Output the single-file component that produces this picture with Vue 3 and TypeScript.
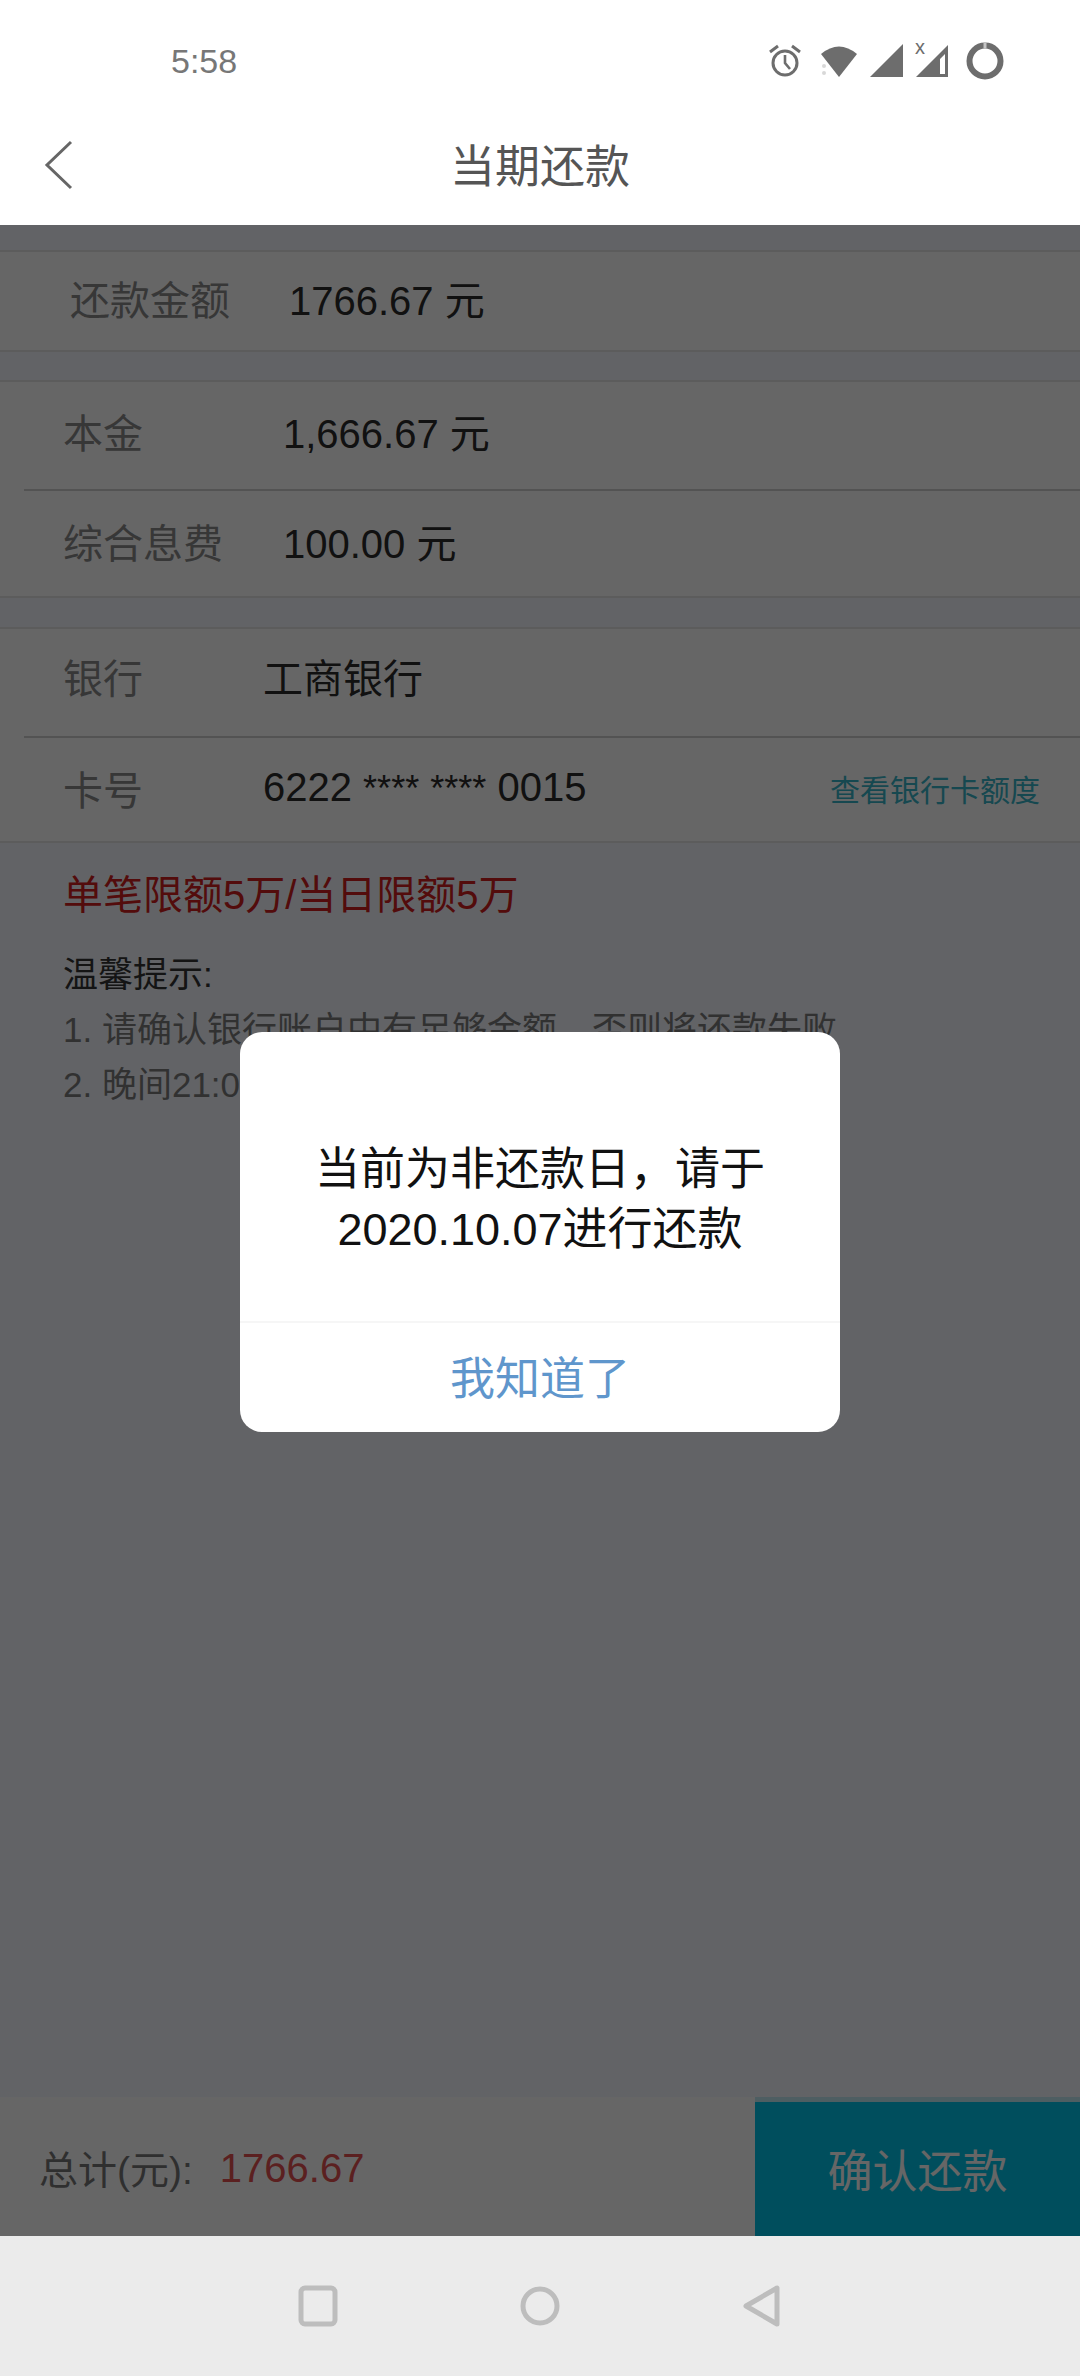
<script setup lang="ts">
interface Row {
  label: string
  value: string
}

const amountRows: Row[] = [
  { label: '本金', value: '1,666.67 元' },
  { label: '综合息费', value: '100.00 元' },
]

const tips = [
  '1. 请确认银行账户中有足够金额，否则将还款失败',
  '2. 晚间21:00至次日07:00为系统维护期，无法还款',
]
</script>

<template>
  <div class="phone">
    <header class="top">
      <div class="status">
        <span class="time">5:58</span>
        <div class="status-icons">
          <svg class="ic-alarm" width="36" height="36" viewBox="0 0 36 36" fill="none" stroke="#6d6d6d" stroke-width="3">
            <circle cx="18" cy="20" r="12" />
            <path d="M18 12v8l5 6" stroke-width="2.6" />
            <path d="M3 9l8-6M33 9l-8-6" />
          </svg>
          <svg class="ic-wifi" width="38" height="34" viewBox="0 0 38 34">
            <path d="M1 10Q19-5 37 10L19 33Z" fill="#6d6d6d" />
            <circle cx="4" cy="22" r="2" fill="#d8d8d8" />
            <circle cx="4" cy="29" r="2" fill="#d8d8d8" />
          </svg>
          <svg class="ic-signal" width="34" height="34" viewBox="0 0 34 34">
            <path d="M0 33L33 0V33Z" fill="#6d6d6d" />
          </svg>
          <div class="ic-sim">
            <svg width="34" height="36" viewBox="0 0 34 36">
              <path d="M1 34L33 2V34ZM25 31H30V11L25 16Z" fill="#6d6d6d" fill-rule="evenodd" />
            </svg>
            <span class="sim-x">x</span>
          </div>
          <svg class="ic-ring" width="38" height="38" viewBox="0 0 38 38" fill="none">
            <circle cx="19" cy="19" r="15.5" stroke="#6d6d6d" stroke-width="6" />
            <path d="M19 0.5V6.5" stroke="#c4c4c4" stroke-width="3" />
          </svg>
        </div>
      </div>
      <div class="nav">
        <svg class="back" width="30" height="50" viewBox="0 0 30 50" fill="none" stroke="#666" stroke-width="3">
          <path d="M27 2L3 25l24 23" />
        </svg>
        <h1 class="title">当期还款</h1>
      </div>
    </header>

    <main class="content">
      <section class="card card-first">
        <div class="row row-pay">
          <span class="label">还款金额</span>
          <span class="value">1766.67 元</span>
        </div>
      </section>

      <section class="card card-amount">
        <div v-for="row in amountRows" :key="row.label" class="row">
          <span class="label">{{ row.label }}</span>
          <span class="value">{{ row.value }}</span>
        </div>
      </section>

      <section class="card card-bank">
        <div class="row">
          <span class="label">银行</span>
          <span class="value">工商银行</span>
        </div>
        <div class="row">
          <span class="label">卡号</span>
          <span class="value">6222 <span class="stars">****</span> <span class="stars">****</span> 0015</span>
          <a class="limit-link">查看银行卡额度</a>
        </div>
      </section>

      <p class="limit">单笔限额5万/当日限额5万</p>

      <div class="tips">
        <p class="tips-title">温馨提示:</p>
        <p v-for="tip in tips" :key="tip" class="tip">{{ tip }}</p>
      </div>

      <footer class="bottom">
        <div class="total">
          <span class="total-label">总计(元):</span>
          <span class="total-num">1766.67</span>
        </div>
        <button class="confirm">确认还款</button>
      </footer>

      <div class="mask"></div>

      <div class="dialog">
        <div class="dialog-body">当前为非还款日，请于<br />2020.10.07进行还款</div>
        <div class="dialog-btn">我知道了</div>
      </div>
    </main>

    <nav class="sys-nav">
      <svg width="40" height="42" viewBox="0 0 40 42" fill="none" stroke="#bdbdbd" stroke-width="5">
        <rect x="3" y="3" width="34" height="36" rx="4" />
      </svg>
      <svg width="40" height="42" viewBox="0 0 40 42" fill="none" stroke="#bdbdbd" stroke-width="5">
        <circle cx="20" cy="21" r="17" />
      </svg>
      <svg width="40" height="42" viewBox="0 0 40 42" fill="none" stroke="#bdbdbd" stroke-width="5" stroke-linejoin="round">
        <path d="M35 3V39L4 21Z" />
      </svg>
    </nav>
  </div>
</template>

<style>
html,
body {
  margin: 0;
  padding: 0;
  background: #fff;
}
</style>

<style scoped>
.phone {
  width: 1080px;
  height: 2376px;
  display: flex;
  flex-direction: column;
  overflow: hidden;
  font-family: "Liberation Sans", "Noto Sans CJK SC", sans-serif;
}

.top {
  height: 225px;
  flex: none;
  background: #fff;
}

.status {
  height: 122px;
  display: flex;
  align-items: center;
  justify-content: space-between;
  padding: 0 76px 0 171px;
  box-sizing: border-box;
}

.time {
  font-size: 34px;
  color: #777;
}

.status-icons {
  display: flex;
  align-items: center;
}

.ic-wifi {
  margin-left: 17px;
}

.ic-signal {
  margin-left: 12px;
}

.ic-sim {
  position: relative;
  width: 34px;
  height: 36px;
  margin-left: 11px;
}

.ic-sim svg {
  display: block;
}

.ic-ring {
  margin-left: 17px;
}

.sim-x {
  position: absolute;
  left: 0;
  top: -6px;
  font-size: 20px;
  line-height: 20px;
  color: #6d6d6d;
}

.nav {
  position: relative;
  height: 84px;
  padding-bottom: 2px;
  box-sizing: border-box;
  display: flex;
  align-items: center;
  justify-content: center;
}

.back {
  position: absolute;
  left: 44px;
  top: 18px;
}

.title {
  margin: 0;
  font-size: 45px;
  font-weight: 400;
  color: #555;
}

.content {
  position: relative;
  flex: 1;
  display: flex;
  flex-direction: column;
  background: #f5f8ff;
  color: #2e2e2e;
  padding-top: 25px;
}

.card {
  background: #fff;
  border-top: 2px solid #e6e6e6;
  border-bottom: 2px solid #e6e6e6;
}

.card-amount {
  margin-top: 28px;
  height: 218px;
  box-sizing: border-box;
}

.card-bank {
  margin-top: 29px;
  height: 216px;
  box-sizing: border-box;
}

.card-first {
  height: 102px;
  box-sizing: border-box;
}

.row {
  display: flex;
  align-items: center;
  height: 107px;
  margin-left: 24px;
  padding: 0 40px 6px 39px;
  font-size: 40px;
  border-top: 2px solid #d0d0d0;
  box-sizing: border-box;
}

.row:first-child {
  border-top: none;
}

.card-amount .row:first-child {
  padding-bottom: 9px;
}

.card-bank .row:first-child {
  padding-bottom: 14px;
}

.row-pay {
  height: 98px;
  margin-left: 0;
  padding-left: 70px;
}

.label {
  width: 220px;
  flex: none;
  color: #8a8a8a;
}

.row-pay .label {
  width: 219px;
}

.card-bank .label {
  width: 200px;
}

.value {
  color: #2b2b2b;
  white-space: nowrap;
}

.stars {
  font-size: 36px;
}

.limit-link {
  margin-left: auto;
  font-size: 30px;
  color: #38b4c8;
}

.limit {
  margin: 29px 0 0 63px;
  font-size: 40px;
  line-height: 46px;
  color: #d02020;
}

.tips {
  margin: 29px 0 0 63px;
  font-size: 35px;
  line-height: 55px;
  color: #7c7c7c;
}

.tips p {
  margin: 0;
  white-space: nowrap;
}

.tips-title {
  color: #333;
}

.bottom {
  margin-top: auto;
  height: 139px;
  flex: none;
  display: flex;
  align-items: stretch;
  background: #fff;
}

.total {
  flex: 1;
  display: flex;
  align-items: center;
  gap: 27px;
  padding-left: 39px;
  font-size: 39px;
  color: #777;
}

.total-num {
  margin-top: 3px;
  font-size: 40px;
  color: #e45050;
}

.confirm {
  width: 325px;
  margin: 0;
  padding: 0 0 2px;
  border: none;
  border-top: 5px solid #c4ecf6;
  background: #00c4e8;
  color: #fff;
  font-family: inherit;
  font-size: 45px;
}

.mask {
  position: absolute;
  inset: 0;
  background: rgba(0, 0, 0, 0.6);
}

.dialog {
  position: absolute;
  left: 240px;
  top: 807px;
  width: 600px;
  height: 400px;
  display: flex;
  flex-direction: column;
  background: #fff;
  border-radius: 22px;
  overflow: hidden;
}

.dialog-body {
  height: 289px;
  padding-top: 108px;
  box-sizing: border-box;
  text-align: center;
  font-size: 45px;
  line-height: 60px;
  color: #111;
}

.dialog-btn {
  flex: 1;
  display: flex;
  align-items: center;
  justify-content: center;
  padding-bottom: 4px;
  border-top: 2px solid #f6f6f6;
  font-size: 45px;
  color: #5f96cc;
}

.sys-nav {
  height: 140px;
  flex: none;
  display: flex;
  align-items: center;
  justify-content: center;
  gap: 182px;
  background: #ebebeb;
}
</style>
